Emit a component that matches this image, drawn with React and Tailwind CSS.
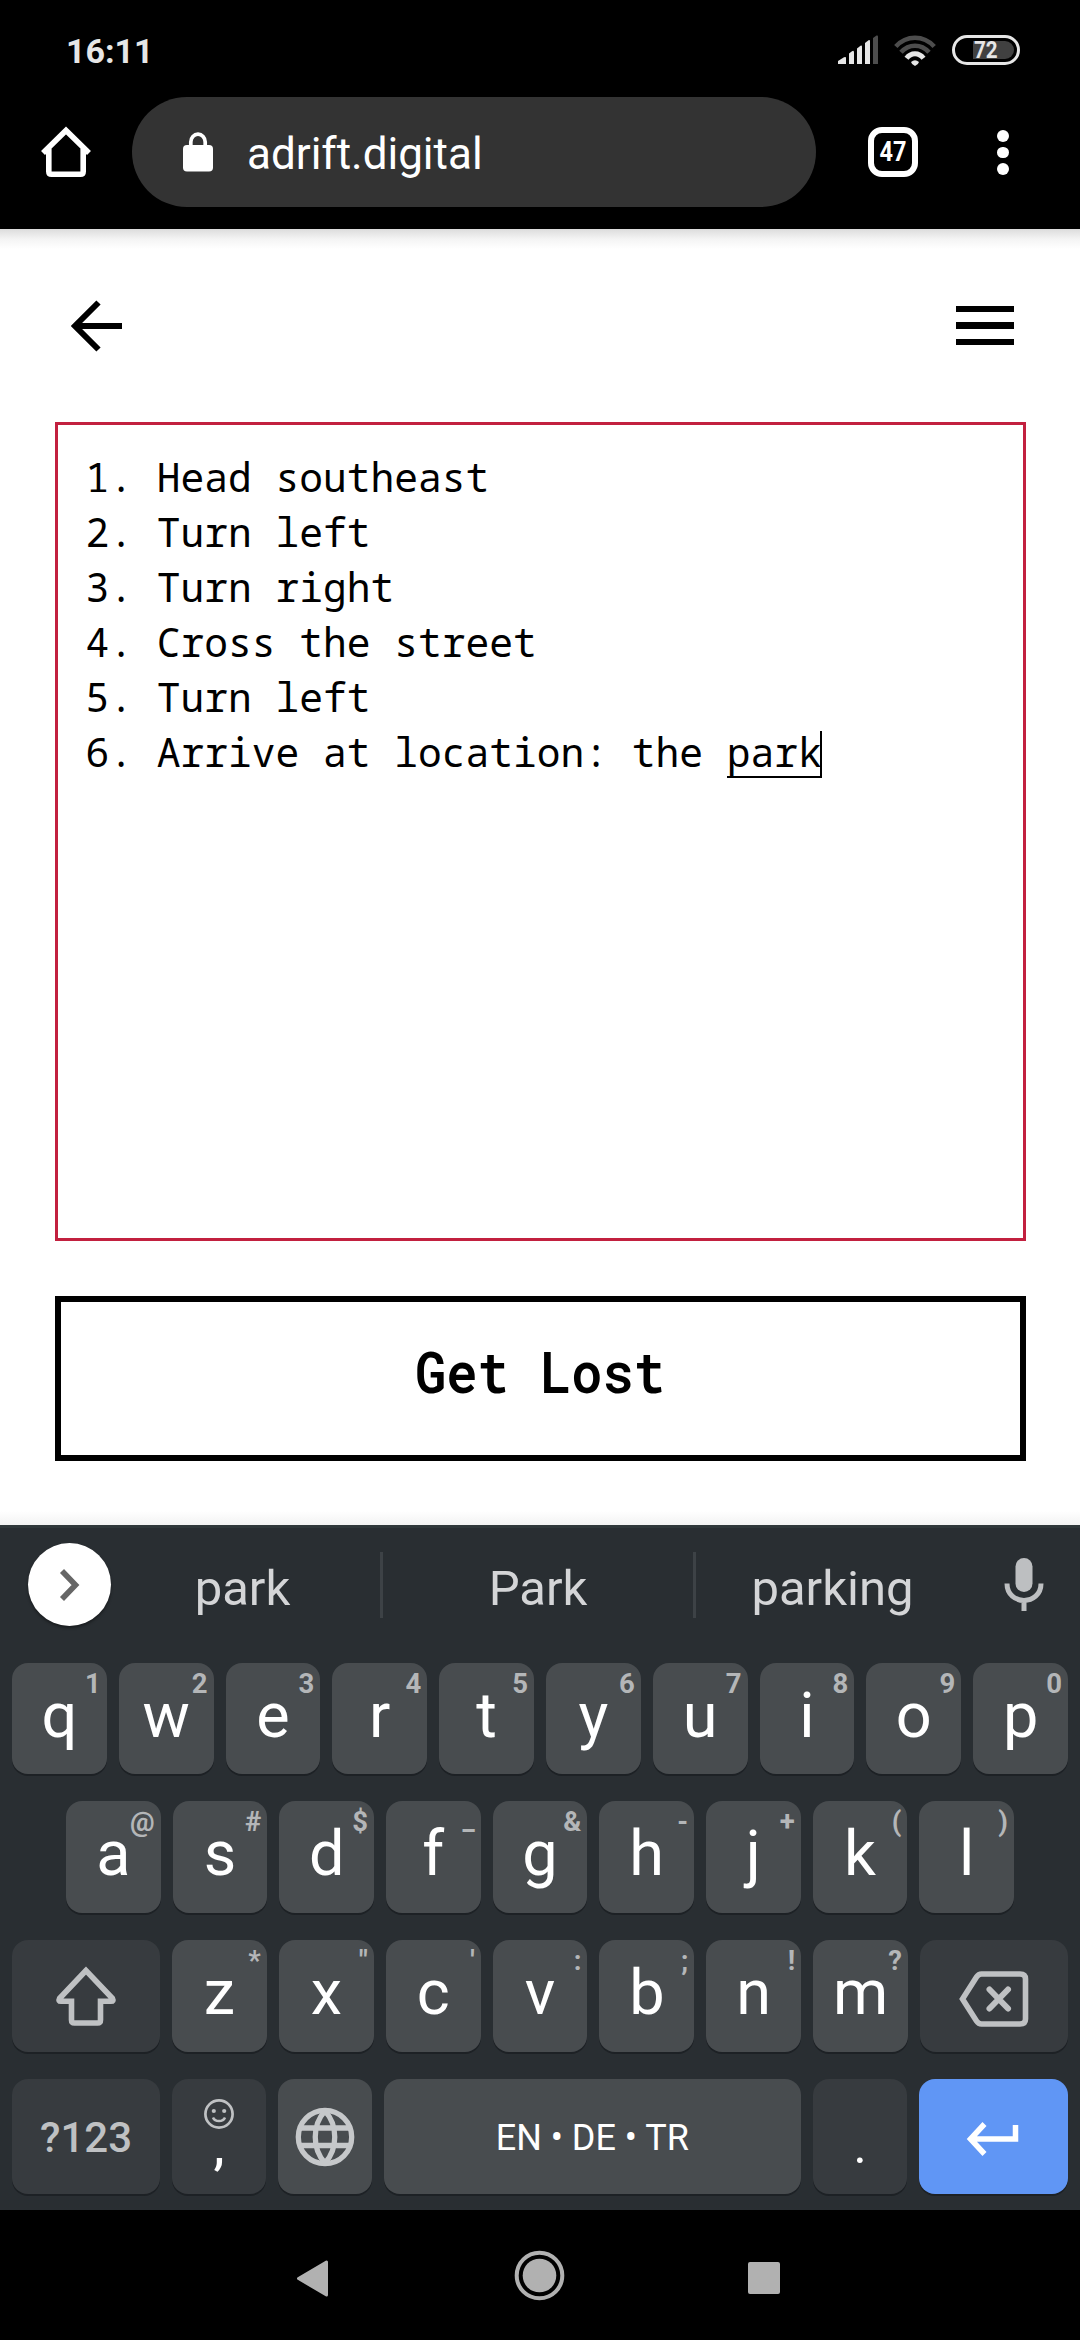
import React from "react";

const STEPS = [
  "1. Head southeast",
  "2. Turn left",
  "3. Turn right",
  "4. Cross the street",
  "5. Turn left",
];

const ROW1 = [["q", "1"], ["w", "2"], ["e", "3"], ["r", "4"], ["t", "5"], ["y", "6"], ["u", "7"], ["i", "8"], ["o", "9"], ["p", "0"]];
const ROW2 = [["a", "@"], ["s", "#"], ["d", "$"], ["f", "_"], ["g", "&"], ["h", "-"], ["j", "+"], ["k", "("], ["l", ")"]];
const ROW3 = [["z", "*"], ["x", '"'], ["c", "'"], ["v", ":"], ["b", ";"], ["n", "!"], ["m", "?"]];

function Key({ letter, hint }) {
  return (
    <div className="relative h-full rounded-[16px] bg-[#484c4f] text-center shadow-[0_2px_0_#1d2125]">
      <span className="block text-[63px] leading-[105px] text-white">{letter}</span>
      <span
        className={
          hint === "_"
            ? "absolute right-[6px] -top-[2px] text-[27.5px] font-bold leading-[41px] text-[#b4b6b8]"
            : "absolute right-[6px] top-0 text-[27.5px] font-bold leading-[41px] text-[#b4b6b8]"
        }
      >
        {hint}
      </span>
    </div>
  );
}

function StatusBar() {
  return (
    <div className="flex h-[97px] items-start pl-[66px] pr-[60px] text-[#e6e6e6]">
      <span className="mt-[30px] text-[34px] font-bold leading-[42px]">16:11</span>
      <svg className="ml-auto mt-[35px]" width="40" height="30" viewBox="0 0 40 30">
        <g fill="#e6e6e6">
          <path d="M0 29V26L6 22.300Q8 21.300 8 23V29Z" />
          <path d="M11 29V18.500L14 16.300Q16 15 16 17.500V29Z" />
          <path d="M19 29V13.500L22.500 10.800Q24 10 24 12V29Z" />
          <path d="M27 29V8L30.500 5.300Q32 4.500 32 6.500V29Z" />
        </g>
        <path d="M35 29V3L38.500 0.500Q40 0 40 1.500V29Z" fill="#4d4d4d" />
      </svg>
      <svg className="ml-[15px] mt-[34px]" width="44" height="33" viewBox="0 0 44 33">
        <g fill="none" strokeWidth="4.600">
          <path d="M2.800 12.500C13.500 0.800 30.500 0.800 41.200 12.500" stroke="#4d4d4d" />
          <path d="M8 18.300C15.800 9.500 28.200 9.500 36 18.300" stroke="#4d4d4d" />
          <path d="M13.500 24.300C18 18.300 26 18.300 30.500 24.300" stroke="#e6e6e6" strokeWidth="5" />
        </g>
        <path d="M18 28Q22 24.300 26 28Q25.500 30.500 22 32Q18.500 30.500 18 28Z" fill="#e6e6e6" />
      </svg>
      <div className="ml-[15px] mt-[35px] flex h-[30px] w-[68px] items-center justify-end rounded-full border-[3px] border-[#e6e6e6] pr-[3px]">
        <div className="flex h-[18px] w-[41px] items-center rounded-r-full bg-[#404040] pl-[1px]">
          <span className="origin-left scale-x-[0.86] text-[24px] font-bold leading-[18px]">72</span>
        </div>
      </div>
    </div>
  );
}

function BrowserBar() {
  return (
    <div className="flex h-[132px] items-start">
      <svg className="ml-[40px] mt-[29px]" width="52" height="53" viewBox="0 0 52 53">
        <path
          d="M3 27L26 4.500L49 27M8.800 22V45.500Q8.800 48.300 11.500 48.300H40.500Q43.200 48.300 43.200 45.500V22"
          fill="none"
          stroke="#fff"
          strokeWidth="5.600"
        />
      </svg>
      <div className="ml-[40px] flex h-[110px] w-[684px] items-center rounded-full bg-[#333333]">
        <svg className="ml-[51px]" width="30" height="40" viewBox="0 0 30 40">
          <path d="M7.800 14V10A7.200 7.800 0 0 1 22.200 10V14" fill="none" stroke="#fff" strokeWidth="3.700" />
          <rect y="13" width="30" height="26.500" rx="4" fill="#fff" />
        </svg>
        <span className="ml-[34px] mt-[3px] text-[44px] leading-[56px] text-white">adrift.digital</span>
      </div>
      <div className="ml-[52px] mt-[30px] flex h-[50px] w-[50px] items-center justify-center rounded-[14px] border-[6px] border-white">
        <span className="scale-x-[0.84] text-[28px] font-bold leading-[38px] text-white">47</span>
      </div>
      <div className="ml-[79px] mt-[33px] flex flex-col gap-[5px]">
        <i className="h-[11.500px] w-[12px] rounded-full bg-white" />
        <i className="h-[11.500px] w-[12px] rounded-full bg-white" />
        <i className="h-[11.500px] w-[12px] rounded-full bg-white" />
      </div>
    </div>
  );
}

function Page() {
  return (
    <main className="flex h-[1296px] flex-col bg-white px-[55px] text-black">
      <div className="-mx-[55px] h-[20px] shrink-0 bg-linear-to-b from-[#dcdcdc] via-[#f4f4f4] to-white" />
      <div className="flex h-[173px] shrink-0 items-start justify-between pl-[15px] pr-[11px]">
        <svg className="mt-[51px]" width="53" height="52" viewBox="0 0 53 52">
          <path d="M28.500 2.500L5 26L28.500 49.500M5 26H52" fill="none" stroke="#000" strokeWidth="6" />
        </svg>
        <div className="mt-[57px] flex flex-col gap-[10px]">
          <i className="h-[6.300px] w-[58px] bg-black" />
          <i className="h-[6.300px] w-[58px] bg-black" />
          <i className="h-[6.300px] w-[58px] bg-black" />
        </div>
      </div>
      <div className="h-[819px] w-[971px] shrink-0 border-[3px] border-[#c2203f] pl-[27.500px] pt-[25px] font-['Noto_Sans_Mono','DejaVu_Sans_Mono',monospace] text-[39.600px] leading-[55px]">
        {STEPS.map((s) => (
          <p key={s} className="whitespace-pre">{s}</p>
        ))}
        <p className="flex whitespace-pre">
          <span>6. Arrive at location: the </span>
          <span className="mt-[6px] h-[47px] w-[95px] border-b-2 border-r-2 border-black leading-[43px]">
            park
          </span>
        </p>
      </div>
      <button className="mt-[55px] flex h-[165px] w-[971px] shrink-0 items-center justify-center border-[6px] border-black pb-[16px]">
        <span className="scale-x-[0.905] font-['Roboto_Mono','DejaVu_Sans_Mono',monospace] text-[57.500px] font-semibold leading-[70px]">Get Lost</span>
      </button>
      <div className="-mx-[55px] mt-auto h-[14px] shrink-0 bg-linear-to-b from-white to-[#f3f3f3]" />
    </main>
  );
}

function Suggestions() {
  return (
    <div className="flex h-[135px] items-start text-[49px] leading-[58px] text-[#d4d5d7]">
      <div className="ml-[28px] mt-[15px] flex h-[83px] w-[83px] items-center justify-center rounded-full bg-white shadow-[0_2px_3px_rgba(0,0,0,0.4)]">
        <svg width="22" height="34" viewBox="0 0 22 34">
          <path d="M3 3L16.500 17L3 31" fill="none" stroke="#666" strokeWidth="5.600" />
        </svg>
      </div>
      <span className="mt-[32px] w-[263px] text-center">park</span>
      <i className="ml-[6px] mt-[24px] h-[66px] w-[3px] bg-[#3d4246]" />
      <span className="mt-[32px] w-[310px] text-center">Park</span>
      <i className="mt-[24px] h-[66px] w-[3px] bg-[#3d4246]" />
      <span className="mt-[32px] w-[273px] text-center">parking</span>
      <svg className="ml-[35px] mt-[29px]" width="40" height="56" viewBox="0 0 40 56">
        <rect x="11.500" y="1" width="17" height="34" rx="8.500" fill="#bdbfc1" />
        <path d="M3 26.500C3 49 37 49 37 26.500M20 43V54" fill="none" stroke="#bdbfc1" strokeWidth="5" />
      </svg>
    </div>
  );
}

const FUNCTION_KEY = "flex w-[148px] items-center justify-center rounded-[16px] bg-[#373b3f] shadow-[0_2px_0_#1d2125]";

function Keyboard() {
  return (
    <section className="h-[685px] border-t-[3px] border-[#30383a] bg-[#292e32]">
      <Suggestions />
      <div className="grid h-[111px] grid-cols-10 gap-3 px-3">
        {ROW1.map(([l, h]) => <Key key={l} letter={l} hint={h} />)}
      </div>
      <div className="mt-[27px] grid h-[112px] grid-cols-9 gap-3 px-[66px]">
        {ROW2.map(([l, h]) => <Key key={l} letter={l} hint={h} />)}
      </div>
      <div className="mt-[27px] flex h-[112px] gap-3 px-3">
        <div className={FUNCTION_KEY}>
          <svg width="62" height="60" viewBox="0 0 62 60">
            <path
              d="M31 4.500L4.500 32.500Q3 35.300 6 35.300H16.500V54Q16.500 57 19.500 57H42.500Q45.500 57 45.500 54V35.300H56Q59 35.300 57.500 32.500Z"
              fill="none"
              stroke="#bfc1c3"
              strokeWidth="5.600"
            />
          </svg>
        </div>
        <div className="grid flex-1 grid-cols-7 gap-3">
          {ROW3.map(([l, h]) => <Key key={l} letter={l} hint={h} />)}
        </div>
        <div className={FUNCTION_KEY}>
          <svg className="mt-[5px]" width="70" height="56" viewBox="0 0 70 56">
            <path
              d="M3.500 28L17.500 6Q19.500 3 22.500 3H61Q66.500 3 66.500 8V48Q66.500 53 61 53H22.500Q19.500 53 17.500 50Z"
              fill="none"
              stroke="#bfc1c3"
              strokeWidth="5.600"
            />
            <path d="M30.500 18.500L49 37.500M49 18.500L30.500 37.500" stroke="#bfc1c3" strokeWidth="6" strokeLinecap="round" />
          </svg>
        </div>
      </div>
      <div className="mt-[27px] flex h-[115px] gap-3 px-3">
        <div className={FUNCTION_KEY}>
          <span className="mt-[3px] text-[42px] font-medium leading-[50px] text-[#bfc1c3]">?123</span>
        </div>
        <div className="flex w-[94px] flex-col items-center rounded-[16px] bg-[#373b3f] shadow-[0_2px_0_#1d2125]">
          <svg className="mt-[20px]" width="30" height="30" viewBox="0 0 30 30">
            <circle cx="15" cy="15" r="13.600" fill="none" stroke="#bfc1c3" strokeWidth="2.700" />
            <circle cx="9.800" cy="12" r="2.100" fill="#bfc1c3" />
            <circle cx="20.200" cy="12" r="2.100" fill="#bfc1c3" />
            <path d="M9 18.500C11 23.300 19 23.300 21 18.500" fill="none" stroke="#bfc1c3" strokeWidth="2.500" />
          </svg>
          <span className="-mt-[12px] text-[50px] font-medium leading-[60px] text-white">,</span>
        </div>
        <div className="flex w-[94px] items-center justify-center rounded-[16px] bg-[#484c4f] shadow-[0_2px_0_#1d2125]">
          <svg width="60" height="60" viewBox="0 0 60 60" fill="none" stroke="#c6c8ca" strokeWidth="5.300">
            <circle cx="30" cy="30" r="26.700" />
            <path d="M30 4C17 18 17 42 30 56M30 4C43 18 43 42 30 56M5 21H55M5 38.500H55" />
          </svg>
        </div>
        <div className="flex flex-1 items-center justify-center rounded-[16px] bg-[#484c4f] shadow-[0_2px_0_#1d2125]">
          <span className="mt-[3px] text-[36px] leading-[42px] text-white">EN • DE • TR</span>
        </div>
        <div className="w-[94.800px] rounded-[16px] bg-[#373b3f] text-center shadow-[0_2px_0_#1d2125]">
          <span className="block pt-[37px] text-[50px] leading-[60px] text-white">.</span>
        </div>
        <div className="flex w-[148.600px] items-center justify-center rounded-[16px] bg-[#6096f5] shadow-[0_2px_0_#1d2125]">
          <svg className="mt-[5px] mr-[3px]" width="53" height="36" viewBox="0 0 53 36">
            <path d="M18.500 3L4.500 18L18.500 33M4.500 18H49.500V4" fill="none" stroke="#fff" strokeWidth="5.500" />
          </svg>
        </div>
      </div>
    </section>
  );
}

function NavBar() {
  return (
    <nav className="flex h-[130px] items-start">
      <svg className="ml-[296px] mt-[49px]" width="33" height="39" viewBox="0 0 33 39">
        <path d="M2.500 19.500L30.500 3V36Z" fill="#b1b1b1" stroke="#b1b1b1" strokeWidth="3" strokeLinejoin="round" />
      </svg>
      <svg className="ml-[185px] mt-[40px]" width="51" height="51" viewBox="0 0 51 51">
        <circle cx="25.500" cy="25.500" r="22.800" fill="none" stroke="#b1b1b1" strokeWidth="4" />
        <circle cx="25.500" cy="25.500" r="16.800" fill="#b1b1b1" />
      </svg>
      <i className="ml-[183px] mt-[52px] h-[32px] w-[32px] rounded-[2px] bg-[#b1b1b1]" />
    </nav>
  );
}

export default function App() {
  return (
    <div className="h-[2340px] w-[1080px] overflow-hidden bg-black font-[Roboto,sans-serif]">
      <StatusBar />
      <BrowserBar />
      <Page />
      <Keyboard />
      <NavBar />
    </div>
  );
}
